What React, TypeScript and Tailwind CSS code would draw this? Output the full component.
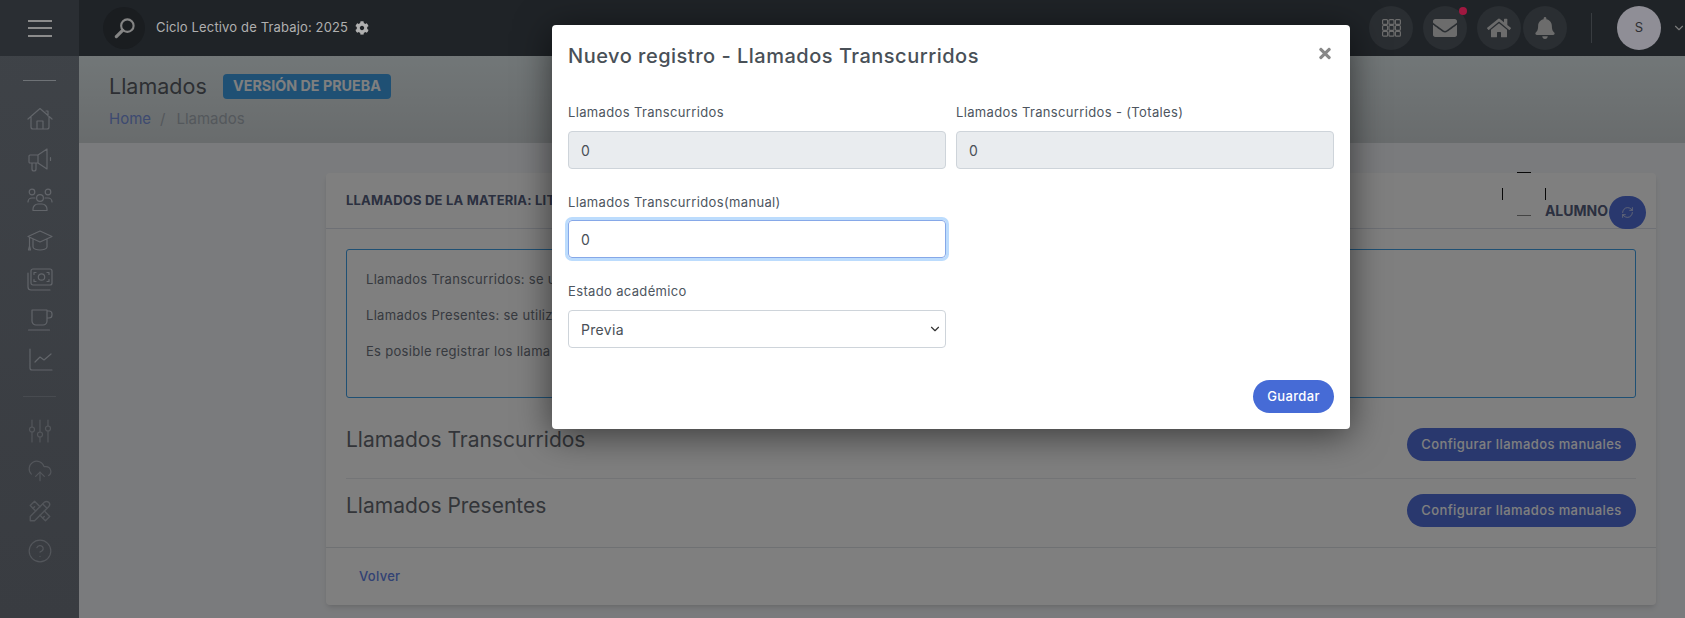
import { ChevronDown, CircleHelp, CloudUpload, RefreshCw } from "lucide-react";
import { FaBell, FaCog, FaEnvelope, FaHome, FaTimes } from "react-icons/fa";
import { TbTools } from "react-icons/tb";

const upperIcons = [
  // house with chimney
  <>
    <path d="M1 12 13 1.5 25 12M4 10v10a2 2 0 0 0 2 2h14a2 2 0 0 0 2-2V10M10 22v-8h6v8M19 4h2v5" />
  </>,
  // megaphone
  <>
    <path d="M3 8h8l9-6v20l-9-6H3a1 1 0 0 1-1-1V9a1 1 0 0 1 1-1zM5 16v6a2 2 0 0 0 4 0v-6M11 8v8M23.5 10.5v3" />
  </>,
  // people
  <>
    <circle cx="5" cy="5" r="2.8" />
    <circle cx="21" cy="5" r="2.8" />
    <circle cx="13" cy="11" r="3.4" />
    <path d="M6 23.5V22a5 5 0 0 1 5-5h4a5 5 0 0 1 5 5v1.5zM1 15a4 4 0 0 1 4-4h3M25 15a4 4 0 0 0-4-4h-3" />
  </>,
  // graduation cap
  <>
    <path d="M13 4 1 9.5 13 15l12-5.500zM6 12.500V20c0 2 4 3 7 3s7-1 7-3v-7.500M2.500 11v8M2.500 19l-1 4h2z" />
  </>,
  // banknotes
  <>
    <rect x="4" y="2" width="21" height="16" rx="2" />
    <circle cx="14.500" cy="10" r="3.200" />
    <path d="M7 5.500h2M7 5.500v2M22 5.500h-2M22 5.500v2M7 14.500h2M7 14.500v-2M22 14.500h-2M22 14.500v-2M1 6v14a3 3 0 0 0 3 3h19" />
  </>,
  // coffee cup
  <>
    <path d="M5 3h15v11a4 4 0 0 1-4 4H9a4 4 0 0 1-4-4zM20 4h2a3 3 0 0 1 3 3v1a3 3 0 0 1-3 3h-2M1.500 23h21" />
  </>,
  // line chart
  <>
    <path d="M3 2v19a2 2 0 0 0 2 2h20M8 15l5-5 4 3 7-6" />
  </>,
];

function LineIcon({ children }: { children: React.ReactNode }) {
  return (
    <svg viewBox="0 0 26 26" className="h-[26px] w-[26px]" fill="none" stroke="currentColor" strokeWidth="1.2" strokeLinecap="round" strokeLinejoin="round">
      {children}
    </svg>
  );
}

function Sidebar() {
  return (
    <aside className="relative z-[15] w-[79px] shrink-0 flex flex-col bg-gradient-to-b from-[#3f4348] to-[#393c41]">
      <div className="h-14 bg-[#2a2e33] flex flex-col items-center justify-center gap-[5.500px] shrink-0">
        <span className="h-[2px] w-6 bg-[#8c8c8c]" />
        <span className="h-[2px] w-6 bg-[#8c8c8c]" />
        <span className="h-[2px] w-6 bg-[#8c8c8c]" />
      </div>
      <div className="mt-6 mx-[23px] h-px bg-[#6e7276]" />
      <div className="mt-[26px] flex flex-col items-center gap-[14px] text-[#62656a]">
        {upperIcons.map((icon, i) => (
          <LineIcon key={i}>{icon}</LineIcon>
        ))}
      </div>
      <div className="mt-[23px] mx-[23px] h-px bg-[#484b50]" />
      <div className="mt-[21px] flex flex-col items-center gap-[14px] text-[#53565b]">
        <LineIcon>
          <path d="M5 2v7M5 14v10M13 2v12M13 19v5M21 2v6M21 13v11" />
          <circle cx="5" cy="11.500" r="2.500" />
          <circle cx="13" cy="16.500" r="2.500" />
          <circle cx="21" cy="10.500" r="2.500" />
        </LineIcon>
        <CloudUpload className="h-[26px] w-[26px]" strokeWidth={1.1} />
        <TbTools className="h-[26px] w-[26px]" style={{ strokeWidth: 1.3 }} />
        <CircleHelp className="h-[26px] w-[26px]" strokeWidth={1.1} />
      </div>
    </aside>
  );
}

function TopIcon({ children, dot }: { children: React.ReactNode; dot?: boolean }) {
  return (
    <div className="relative h-11 w-11 rounded-full bg-[#2a2e32] flex items-center justify-center text-[#6c6c6c]">
      {children}
      {dot && <span className="absolute right-0 top-px h-2 w-2 rounded-full bg-[#a01840]" />}
    </div>
  );
}

function Topbar() {
  return (
    <header className="relative z-[15] h-14 shrink-0 bg-[#1f2327] flex items-center pl-6">
      <div className="h-[42px] w-[42px] rounded-full bg-[#1a1d20] flex items-center justify-center">
        <svg viewBox="0 0 24 24" className="h-[23px] w-[23px]" fill="none" stroke="#848484" strokeWidth="2.200">
          <circle cx="15" cy="9" r="6.500" />
          <path d="M10 14 3.500 20.500" strokeWidth="3.400" strokeLinecap="round" />
        </svg>
      </div>
      <span className="ml-[11px] text-[13px] tracking-[0.15px] text-[#b0b0b0]">Ciclo Lectivo de Trabajo: 2025</span>
      <FaCog className="ml-[7px] h-[14px] w-[14px] text-[#b0b0b0]" />
      <div className="ml-auto flex items-center">
        <TopIcon>
          <svg viewBox="0 0 19 18" className="h-[18px] w-[19px]" fill="none" stroke="currentColor" strokeWidth="1.200">
            {[0.6, 7, 13.400].map((x) =>
              [0.6, 6.500, 12.400].map((y) => <rect key={`${x}-${y}`} x={x} y={y} width="5" height="4.800" rx="1" />),
            )}
          </svg>
        </TopIcon>
        <div className="ml-[10px]">
          <TopIcon dot>
            <FaEnvelope className="h-[24px] w-[24px]" />
          </TopIcon>
        </div>
        <div className="ml-[10px]">
          <TopIcon>
            <FaHome className="h-6 w-6" />
          </TopIcon>
        </div>
        <div className="ml-[2px]">
          <TopIcon>
            <FaBell className="h-[22px] w-[22px]" />
          </TopIcon>
        </div>
        <div className="ml-6 h-[30px] w-px bg-[#383c40]" />
        <div className="ml-[25px] h-11 w-11 rounded-full bg-[#8f8e96] flex items-center justify-center text-[13px] text-[#2e2e32]">
          S
        </div>
        <ChevronDown className="ml-[11px] -mr-px h-[14px] w-[14px] text-[#7a7a7a]" />
      </div>
    </header>
  );
}

function ActionRow({ title }: { title: string }) {
  return (
    <div className="flex items-start justify-between h-[33px]">
      <h3 className="text-[21px] leading-6 text-[#666b73]">{title}</h3>
      <button className="h-[33px] w-[229px] rounded-full bg-[#5270dc] text-white text-[13px] tracking-[0.4px] font-medium">
        Configurar llamados manuales
      </button>
    </div>
  );
}

function Card() {
  return (
    <section className="relative h-[432px] bg-white rounded shadow-md flex flex-col">
      <div className="relative h-14 border-b border-[#dce1ea] flex items-center pl-5 shrink-0">
        <h2 className="whitespace-nowrap text-[13px] tracking-[0.2px] font-bold text-[#566080]">LLAMADOS DE LA MATERIA: LIT</h2>
        <svg viewBox="0 0 44 44" className="absolute right-[110px] -top-px h-11 w-11" fill="none" strokeWidth="1">
          <path d="M15 .5h14M.5 16v12M43.500 16v12" stroke="#111" />
          <path d="M15 43.500h14" stroke="#888" />
        </svg>
        <span className="absolute right-[48px] top-[28px] text-[14px] leading-5 font-bold text-[#566080]">ALUMNO</span>
        <button className="absolute right-[10px] top-[23px] h-[33px] w-[37px] rounded-full bg-[#5270dc] flex items-center justify-center text-[#d8ddf0]">
          <RefreshCw className="h-[13px] w-[13px]" strokeWidth={1.5} />
        </button>
      </div>
      <div className="px-5 pt-5">
        <div className="h-[149px] rounded-[3px] border border-[#3ea0e8] pl-[19px] pt-[19px] text-[13px] leading-5 tracking-[0.3px] text-[#6e747e] flex flex-col gap-4">
          <p className="whitespace-nowrap">Llamados Transcurridos: se u</p>
          <p className="whitespace-nowrap">Llamados Presentes: se utiliz</p>
          <p className="whitespace-nowrap">Es posible registrar los llama</p>
        </div>
        <div className="mt-[30px] pb-[17px] border-b border-[#e8eaee]">
          <ActionRow title="Llamados Transcurridos" />
        </div>
        <div className="mt-[15px]">
          <ActionRow title="Llamados Presentes" />
        </div>
      </div>
      <div className="mt-5 flex-1 border-t border-[#dfe2e7] pl-[33px] flex items-center">
        <a className="text-[13px] tracking-[0.3px] font-medium text-[#6484e8]">Volver</a>
      </div>
    </section>
  );
}

function Field({ label, tight, children }: { label: string; tight?: boolean; children: React.ReactNode }) {
  return (
    <div>
      <label className="block h-[18px] text-[13px] leading-[18px] tracking-[0.35px] text-[#4d5560]">{label}</label>
      <div className={tight ? "mt-[9px]" : "mt-[10px]"}>{children}</div>
    </div>
  );
}

function Modal() {
  return (
    <div className="absolute left-[552px] top-[25px] z-20 w-[798px] h-[404px] bg-white rounded shadow-[0_6px_36px_rgba(0,0,0,0.55)] px-4">
      <h1 className="pt-[17px] text-[20px] leading-7 tracking-[0.5px] font-medium text-[#495057]">Nuevo registro - Llamados Transcurridos</h1>
      <FaTimes className="absolute right-[17px] top-[20px] h-[17px] w-[16px] text-[#888]" />
      <div className="mt-[33px] grid grid-cols-[378px_378px] gap-x-[10px] gap-y-6">
        <Field label="Llamados Transcurridos">
          <div className="h-[38px] rounded border border-[#ced4da] bg-[#e9ecef] px-3 flex items-center text-[14px] text-[#495057]">0</div>
        </Field>
        <Field label="Llamados Transcurridos - (Totales)">
          <div className="h-[38px] rounded border border-[#ced4da] bg-[#e9ecef] px-3 flex items-center text-[14px] text-[#495057]">0</div>
        </Field>
        <Field label="Llamados Transcurridos(manual)" tight>
          <div className="h-[38px] rounded border border-[#86a8e8] ring-[3px] ring-[#bcdcfd] px-3 flex items-center text-[14px] text-[#495057]">0</div>
        </Field>
        <div />
        <Field label="Estado académico">
          <div className="h-[38px] rounded border border-[#ced4da] pl-3 pr-[3px] flex items-center justify-between text-[14px] tracking-[0.3px] text-[#495057]">
            Previa
            <ChevronDown className="h-[14px] w-[14px] text-[#333]" strokeWidth={2} />
          </div>
        </Field>
      </div>
      <button className="absolute right-4 bottom-4 h-[33px] w-[81px] rounded-full bg-[#466bd6] text-white text-[13px] tracking-[0.35px] font-medium">
        Guardar
      </button>
    </div>
  );
}

export default function App() {
  return (
    <div className="relative h-[618px] w-[1685px] overflow-hidden flex bg-[#f5f7fa] font-['Inter','Noto_Sans',sans-serif]">
      <Sidebar />
      <div className="flex-1 flex flex-col">
        <Topbar />
        <div className="h-[87px] shrink-0 bg-gradient-to-b from-[#e4eef0] to-[#d2d8da] pl-[30px] pt-[17px]">
          <div className="flex items-center h-[26px]">
            <h1 className="w-[97px] whitespace-nowrap text-[21.500px] text-[#5a5f66]">Llamados</h1>
            <span className="ml-[17px] h-[25px] w-[168px] rounded bg-[#3ea0e8] text-white text-[14.300px] font-bold flex items-center justify-center">
              VERSIÓN DE PRUEBA
            </span>
          </div>
          <nav className="mt-[9px] flex text-[15px] text-[#a8b0b8]">
            <a className="text-[#7a94e0]">Home</a>
            <span className="ml-[9px]">/</span>
            <span className="ml-[11px]">Llamados</span>
          </nav>
        </div>
        <main className="pl-[247px] pr-[29px] pt-[30px]">
          <Card />
        </main>
      </div>
      {/* backdrop, topbar and sidebar stay above it */}
      <div className="absolute inset-0 z-10 bg-black/50" />
      <Modal />
    </div>
  );
}
